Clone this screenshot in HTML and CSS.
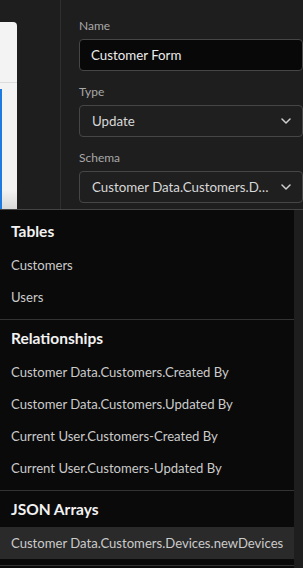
FILE: index.html
```html
<!DOCTYPE html>
<html>
<head>
<meta charset="utf-8">
<link rel="stylesheet" href="styles.css">
</head>
<body>
<div class="top">
  <div class="canvas">
    <div class="card">
      <div class="card-head"></div>
      <div class="card-body"><div class="selected-box"></div></div>
    </div>
  </div>
  <div class="divider"></div>
  <div class="props">
    <div class="field">
      <div class="label">Name</div>
      <div class="input">Customer Form</div>
    </div>
    <div class="field">
      <div class="label">Type</div>
      <div class="select"><span class="value">Update</span><svg class="chev" width="10" height="6" viewBox="0 0 10 6"><path d="M1 1 L5 5 L9 1" fill="none" stroke="#cfcfcf" stroke-width="1.5" stroke-linecap="round" stroke-linejoin="round"/></svg></div>
    </div>
    <div class="field">
      <div class="label">Schema</div>
      <div class="select"><span class="value">Customer Data.Customers.D…</span><svg class="chev" width="10" height="6" viewBox="0 0 10 6"><path d="M1 1 L5 5 L9 1" fill="none" stroke="#cfcfcf" stroke-width="1.5" stroke-linecap="round" stroke-linejoin="round"/></svg></div>
    </div>
  </div>
</div>
<div class="menu-wrap">
  <div class="menu">
    <div class="group first">
      <div class="group-title">Tables</div>
      <div class="item">Customers</div>
      <div class="item">Users</div>
    </div>
    <div class="group">
      <div class="group-title">Relationships</div>
      <div class="item">Customer Data.Customers.Created By</div>
      <div class="item">Customer Data.Customers.Updated By</div>
      <div class="item">Current User.Customers-Created By</div>
      <div class="item">Current User.Customers-Updated By</div>
    </div>
    <div class="group">
      <div class="group-title">JSON Arrays</div>
      <div class="item active">Customer Data.Customers.Devices.newDevices</div>
    </div>
  </div>
</div>
</body>
</html>
```

FILE: styles.css
```css
* { box-sizing: border-box; }
html, body {
  margin: 0;
  padding: 0;
  width: 303px;
  height: 568px;
  overflow: hidden;
  background: #1e1e1e;
  font-family: Lato, "Liberation Sans", sans-serif;
}
body {
  display: flex;
  flex-direction: column;
}
.top {
  display: grid;
  grid-template-columns: 60px 1px 1fr;
  height: 209px;
  flex: none;
}
.canvas {
  padding-top: 22px;
}
.card {
  width: 17px;
  height: 187px;
  background: #f3f3f3;
  border-top-right-radius: 4px;
  display: flex;
  flex-direction: column;
}
.card-head {
  height: 61px;
  border-bottom: 1px solid #dcdcdc;
}
.card-body {
  flex: 1;
  padding-top: 6px;
  background: linear-gradient(to bottom, #f3f3f3 85%, #d8d8d8 100%);
}
.selected-box {
  width: 2px;
  height: 100%;
  background: #1f7ae0;
}
.divider {
  background: #2f2f2f;
}
.props {
  padding: 18px 0 0 18px;
  display: flex;
  flex-direction: column;
  gap: 13px;
}
.field {
  display: flex;
  flex-direction: column;
}
.label {
  font-size: 12px;
  line-height: 16px;
  color: #a8a8a8;
  margin-bottom: 5px;
}
.input, .select {
  height: 32px;
  width: 224px;
  border: 1px solid #464646;
  border-radius: 4px;
  font-size: 13.3px;
  color: #ececec;
  display: flex;
  align-items: center;
}
.input {
  background: #080808;
  padding-left: 11px;
}
.select {
  background: #1f1f1f;
  padding-left: 12px;
  padding-right: 11px;
  color: #d8d8d8;
}
.select .value {
  flex: 1;
  white-space: nowrap;
  overflow: hidden;
}
.chev {
  flex: none;
  margin-left: 8px;
}
.menu-wrap {
  border-top: 1px solid #444;
  flex: 1;
  display: flex;
  min-height: 0;
}
.menu {
  width: 294px;
  background: #0a0a0a;
  overflow: hidden;
}
.group {
  padding: 3px 0 6px;
  border-bottom: 1px solid #333;
}
.group.first {
  padding-top: 6px;
}
.group-title {
  font-size: 15.5px;
  font-weight: 700;
  line-height: 30px;
  color: #f2f2f2;
  padding-left: 11px;
  margin-bottom: 3px;
}
.item {
  font-size: 13.1px;
  line-height: 32px;
  height: 32px;
  color: #cbcbcb;
  padding-left: 11px;
  white-space: nowrap;
}
.item.active {
  background: #2a2a2a;
}
```
